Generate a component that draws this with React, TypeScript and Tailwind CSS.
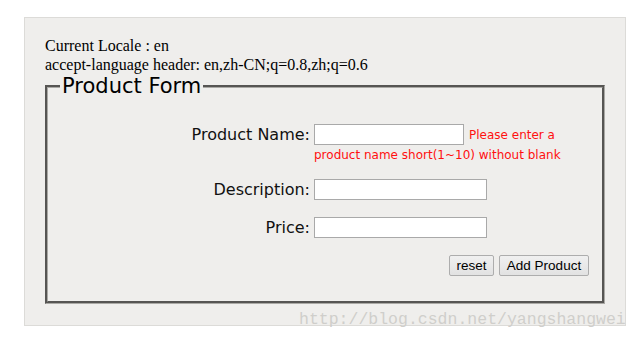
const labelCls =
  "w-[266px] pr-[4px] text-right text-[16px] leading-[20px] text-[#111] [font-family:'DejaVu_Sans',sans-serif]";
const inputCls = "h-[21px] border border-[#a9a9a9] bg-white px-1 text-[13px] outline-none";
const btnCls =
  "h-[21px] rounded-[2px] border border-[#adadad] bg-gradient-to-b from-[#f0f0f0] to-[#e2e2e2] px-[6px] text-[13.5px] leading-[19px] text-black [font-family:'Liberation_Sans',Arial,sans-serif]";

export default function App() {
  return (
    <div className="relative min-h-[342px] w-[641px] bg-white pt-[17px] pl-[24px]">
      <div className="w-[602px] h-[309px] border border-[#dcdbd8] bg-[#efeeec] px-[20px] pt-[19px]">
        {/* locale info */}
        <div className="text-[16px] leading-[18.5px] text-black [font-family:'Liberation_Serif','Times_New_Roman',serif]">
          <p>Current Locale : en</p>
          <p>accept-language header: en,zh-CN;q=0.8,zh;q=0.6</p>
        </div>

        <fieldset className="w-[560px] border-[3px] [border-style:groove] border-[#aaa9a5] pb-[25px]">
          <legend className="ml-[12px] px-[2px] text-[21px] leading-[24px] text-black [font-family:'DejaVu_Sans',sans-serif]">
            Product Form
          </legend>

          <div className="mt-[26px] flex items-center">
            <label className={labelCls}>Product Name:</label>
            <input className={`${inputCls} w-[150px] h-[20px]`} />
            <span className="ml-[5px] text-[12px] leading-[16px] text-[#ff1010] [font-family:'DejaVu_Sans',sans-serif]">
              Please enter a
            </span>
          </div>
          <div className="mt-[2px] pl-[266px] text-[12px] leading-[16px] text-[#ff1010] [font-family:'DejaVu_Sans',sans-serif]">
            product name short(1~10) without blank
          </div>

          <div className="mt-[16px] flex items-center">
            <label className={labelCls}>Description:</label>
            <input className={`${inputCls} w-[173px]`} />
          </div>

          <div className="mt-[17px] flex items-center">
            <label className={labelCls}>Price:</label>
            <input className={`${inputCls} w-[173px]`} />
          </div>

          <div className="mt-[17px] flex justify-end gap-[5px] pr-[13px]">
            <button className={`${btnCls} w-[45px]`}>reset</button>
            <button className={`${btnCls} w-[90px]`}>Add Product</button>
          </div>
        </fieldset>
      </div>

      {/* blog watermark */}
      <span className="absolute left-[299px] top-[309px] text-[16.5px] leading-[22px] text-[#cfcecb] [font-family:'Liberation_Mono','Courier_New',monospace]">
        http://blog.csdn.net/yangshangwei
      </span>
    </div>
  );
}
